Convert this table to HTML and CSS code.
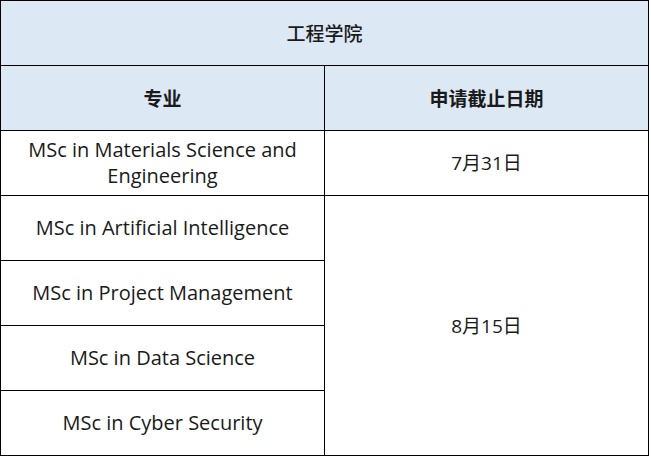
FILE: index.html
```html
<!DOCTYPE html>
<html lang="zh-CN">
<head>
<meta charset="utf-8">
<link rel="stylesheet" href="styles.css">
</head>
<body>
<table class="deadlines">
  <tr class="head">
    <th colspan="2" class="title">工程学院</th>
  </tr>
  <tr class="head">
    <th class="col">专业</th>
    <th class="col">申请截止日期</th>
  </tr>
  <tr>
    <td>MSc in Materials Science and<br>Engineering</td>
    <td class="date">7月31日</td>
  </tr>
  <tr>
    <td>MSc in Artificial Intelligence</td>
    <td rowspan="4" class="date">8月15日</td>
  </tr>
  <tr>
    <td>MSc in Project Management</td>
  </tr>
  <tr>
    <td>MSc in Data Science</td>
  </tr>
  <tr>
    <td>MSc in Cyber Security</td>
  </tr>
</table>
</body>
</html>
```

FILE: styles.css
```css
html, body {
  margin: 0;
  padding: 0;
  background: #ffffff;
}

.deadlines {
  border-collapse: collapse;
  width: 649px;
  table-layout: fixed;
  font-family: "Open Sans", "Noto Sans CJK SC", sans-serif;
  font-size: 20px;
  color: #1a1a1a;
}

.deadlines th,
.deadlines td {
  border: 1px solid #000000;
  height: 64px;
  padding: 0 2px;
  text-align: center;
  vertical-align: middle;
  line-height: 26px;
}

.head th {
  background: #dce8f4;
}

.title {
  font-size: 19px;
  font-weight: 500;
  font-family: "Noto Sans CJK SC", sans-serif;
}

.col {
  font-size: 19px;
  font-weight: 700;
  font-family: "Noto Sans CJK SC", sans-serif;
}

.deadlines .date {
  font-size: 19px;
}
```
